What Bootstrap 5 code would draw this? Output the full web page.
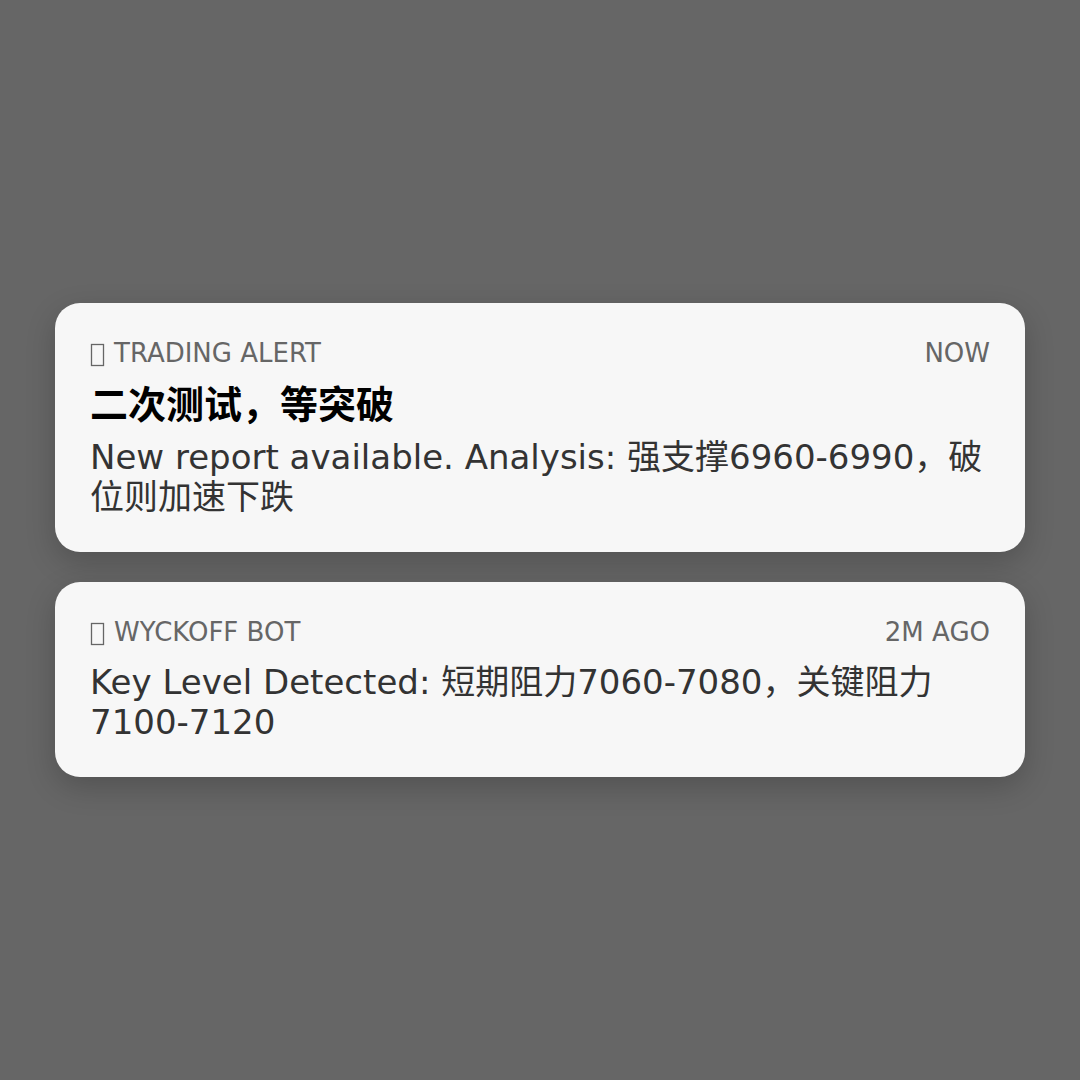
<!DOCTYPE html>
<html lang="zh-CN">
<head>
  <meta charset="UTF-8">
  <title>Trading notifications</title>
  <meta name="viewport" content="width=device-width, initial-scale=1">
  <!-- Bootstrap CSS via CDN -->
  <link href="https://cdn.jsdelivr.net/npm/bootstrap@5.3.0/dist/css/bootstrap.min.css" rel="stylesheet">
  <style>
    body {
      background: #666;
      font-family: "DejaVu Sans", "Noto Sans CJK SC", sans-serif;
    }
    .notice-stack {
      gap: 30px;
      padding: 30px 55px;
    }
    .notice {
      padding: 35px;
      border: 0;
      border-radius: 25px;
      background: #f7f7f7;
      box-shadow: 0 10px 30px rgba(0, 0, 0, 0.2);
    }
    .notice-header {
      margin-bottom: 15px;
      color: #666;
      font-size: 26px;
      line-height: 30px;
    }
    .notice-icon {
      width: 16px;
      height: 24px;
      margin-top: 4px;
    }
    .notice-title {
      margin-bottom: 10px;
      color: #000;
      font-size: 38px;
      line-height: 44px;
    }
    .notice-text {
      color: #333;
      font-size: 34px;
      line-height: 40px;
    }
  </style>
</head>
<body>

  <main class="notice-stack d-flex flex-column justify-content-center min-vh-100">
    <!-- Trading alert -->
    <article class="card notice">
      <header class="notice-header d-flex justify-content-between">
        <div class="d-flex align-items-center gap-2">
          <svg class="notice-icon" viewBox="0 0 16 24" aria-hidden="true"><rect x="1.5" y="1.5" width="12" height="21" fill="none" stroke="currentColor" stroke-width="1.3"/></svg>
          <span>TRADING ALERT</span>
        </div>
        <time>NOW</time>
      </header>
      <h2 class="notice-title fw-bold">二次测试，等突破</h2>
      <p class="notice-text mb-0">New report available. Analysis: 强支撑6960-6990，破位则加速下跌</p>
    </article>

    <!-- Bot message -->
    <article class="card notice">
      <header class="notice-header d-flex justify-content-between">
        <div class="d-flex align-items-center gap-2">
          <svg class="notice-icon" viewBox="0 0 16 24" aria-hidden="true"><rect x="1.5" y="1.5" width="12" height="21" fill="none" stroke="currentColor" stroke-width="1.3"/></svg>
          <span>WYCKOFF BOT</span>
        </div>
        <time>2M AGO</time>
      </header>
      <p class="notice-text mb-0">Key Level Detected: 短期阻力7060-7080，关键阻力7100-7120</p>
    </article>
  </main>

  <!-- Bootstrap Bundle with Popper -->
  <script src="https://cdn.jsdelivr.net/npm/bootstrap@5.3.0/dist/js/bootstrap.bundle.min.js"></script>
</body>
</html>
